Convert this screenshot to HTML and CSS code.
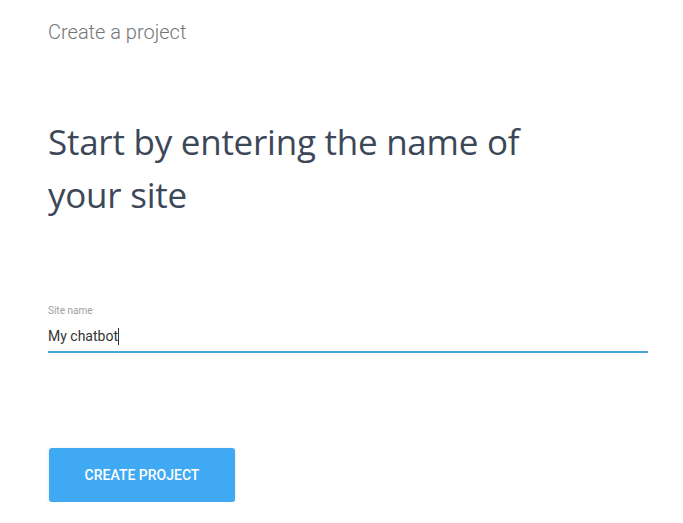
FILE: index.html
```html
<!DOCTYPE html>
<html>
<head>
<meta charset="utf-8">
<link rel="stylesheet" href="styles.css">
</head>
<body>
<div class="page">
  <div class="topbar">Create a project</div>
  <h1 class="title">Start by entering the name of<br>your site</h1>
  <div class="field">
    <label class="field-label">Site name</label>
    <div class="field-value">My chatbot<span class="caret"></span></div>
  </div>
  <button class="btn">CREATE PROJECT</button>
</div>
</body>
</html>
```
FILE: styles.css
```css
html, body {
  margin: 0;
  padding: 0;
  background: #ffffff;
}
.page {
  padding: 20px 0 0 48px;
  font-family: Roboto, "Liberation Sans", sans-serif;
}
.topbar {
  font-size: 20px;
  font-weight: 300;
  color: #757575;
  line-height: 24px;
}
.title {
  margin: 71px 0 0 0;
  font-family: "Open Sans", Roboto, sans-serif;
  font-weight: 400;
  font-size: 35px;
  line-height: 53px;
  color: #3c4858;
  letter-spacing: -0.25px;
}
.field {
  width: 600px;
  margin-top: 83px;
  border-bottom: 2px solid #4aa3d6;
  padding-bottom: 6px;
}
.field-label {
  display: block;
  font-size: 10px;
  color: #9e9e9e;
  line-height: 14px;
}
.field-value {
  margin-top: 9px;
  font-size: 14px;
  color: #333333;
  line-height: 18px;
}
.caret {
  display: inline-block;
  width: 1px;
  height: 17px;
  background: #333;
  vertical-align: -4px;
}
.btn {
  display: block;
  margin-top: 95px;
  margin-left: 1px;
  width: 186px;
  height: 54px;
  border: none;
  border-radius: 3px;
  background: #40a9f3;
  color: #ffffff;
  font-family: Roboto, sans-serif;
  font-weight: 500;
  font-size: 14px;
  box-shadow: 0 1px 3px rgba(0,0,0,0.15);
  padding: 0;
}
```
